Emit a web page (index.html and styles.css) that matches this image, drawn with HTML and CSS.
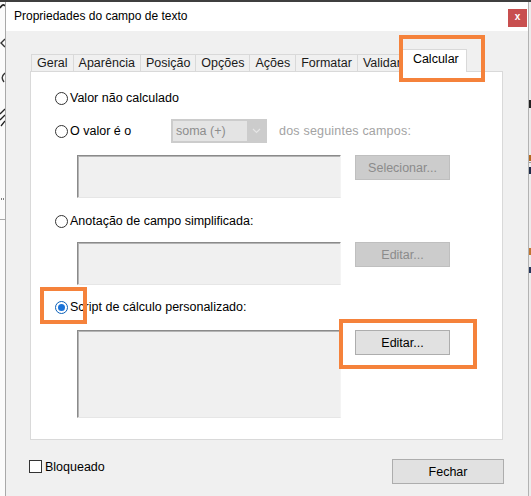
FILE: index.html
```html
<!DOCTYPE html>
<html lang="pt">
<head>
<meta charset="utf-8">
<title>Propriedades do campo de texto</title>
<link rel="stylesheet" href="styles.css">
</head>
<body>
<div class="screen">
  <div class="topband"></div>
  <div class="row">
    <div class="bg-left">
      <svg width="5" height="494" viewBox="0 0 5 494">
        <path d="M0 6 Q3 1 5 4" fill="none" stroke="#222" stroke-width="1.5"/>
        <path d="M5 37 L1 41 L5 45" fill="none" stroke="#333" stroke-width="1.4"/>
        <path d="M5 71 Q0 75 4 80" fill="none" stroke="#333" stroke-width="1.4"/>
        <path d="M0 112 L5 107 M0 118 L5 113 M1 124 L5 119" fill="none" stroke="#222" stroke-width="1.3"/>
        <path d="M1 197 h1 M3 197 h1" stroke="#555" stroke-width="1.5"/>
        <path d="M0 217.5 H5" stroke="#a8a8a8" stroke-width="1"/>
      </svg>
    </div>
    <div class="window">
      <div class="titlebar">
        <span class="title">Propriedades do campo de texto</span>
        <span class="close">x</span>
      </div>
      <div class="dlg-body">
        <div class="tabs">
          <div class="tab">Geral</div>
          <div class="tab">Aparência</div>
          <div class="tab">Posição</div>
          <div class="tab">Opções</div>
          <div class="tab">Ações</div>
          <div class="tab">Formatar</div>
          <div class="tab">Validar</div>
          <div class="tab active">Calcular</div>
        </div>
        <div class="panel">
          <div class="opt">
            <span class="radio"></span><span class="lbl">Valor não calculado</span>
          </div>
          <div class="opt opt-value">
            <div class="opt-label"><span class="radio"></span><span class="lbl">O valor é o</span></div>
            <div class="select">
              <span class="select-text">soma (+)</span>
              <span class="select-arrow">
                <svg width="9" height="6" viewBox="0 0 9 6"><path d="M1 1 L4.5 4.5 L8 1" fill="none" stroke="#e6e6e6" stroke-width="1.2"/></svg>
              </span>
            </div>
            <span class="muted">dos seguintes campos:</span>
          </div>
          <div class="group g1">
            <div class="field"></div>
            <button class="btn disabled">Selecionar...</button>
          </div>
          <div class="opt o3">
            <span class="radio"></span><span class="lbl">Anotação de campo simplificada:</span>
          </div>
          <div class="group g2">
            <div class="field"></div>
            <button class="btn disabled">Editar...</button>
          </div>
          <div class="opt o4">
            <span class="radio checked"></span><span class="lbl">Script de cálculo personalizado:</span>
          </div>
          <div class="group g3">
            <div class="field tall"></div>
            <button class="btn">Editar...</button>
          </div>
        </div>
        <div class="footer">
          <div class="check"><span class="box"></span><span class="lbl">Bloqueado</span></div>
          <button class="btn btn-close">Fechar</button>
        </div>
      </div>
    </div>
    <div class="bg-right">
      <svg width="2" height="494" viewBox="0 0 2 494">
        <rect x="0" y="98" width="2" height="8" fill="#222"/>
        <rect x="0" y="153" width="2" height="6" fill="#b4691f"/>
        <rect x="0" y="160" width="2" height="1" fill="#9a9a9a"/>
        <rect x="0" y="165" width="2" height="7" fill="#1d2b48"/>
        <rect x="0" y="246" width="2" height="7" fill="#c07530"/>
        <rect x="0" y="265" width="2" height="6" fill="#24355a"/>
      </svg>
    </div>
  </div>
  <div class="mark mark-tab"></div>
  <div class="mark mark-radio"></div>
  <div class="mark mark-edit"></div>
</div>
</body>
</html>
```

FILE: styles.css
```css
* { box-sizing: border-box; }
html, body { margin: 0; padding: 0; }
body {
  width: 531px;
  height: 496px;
  overflow: hidden;
  font-family: "Liberation Sans", Arial, sans-serif;
  font-size: 12.5px;
  color: #000;
  background: #fafafa;
}
.screen {
  position: relative;
  width: 531px;
  height: 496px;
  display: flex;
  flex-direction: column;
}
.topband { height: 2px; background: #3f3f3f; flex: 0 0 2px; }
.row { display: flex; flex: 1 1 auto; }
.bg-left { width: 5px; flex: 0 0 5px; background: #fbfbfb; }
.bg-left svg, .bg-right svg { display: block; }
.bg-right { width: 2px; flex: 0 0 2px; background: #ececec; }
.window {
  width: 524px;
  flex: 0 0 524px;
  border-left: 1px solid #a9a9a9;
  border-right: 1px solid #b2b2b2;
  background: #f0f0f0;
  display: flex;
  flex-direction: column;
}
.titlebar {
  height: 29px;
  background: #fff;
  display: flex;
  align-items: flex-start;
  justify-content: space-between;
  padding-left: 8px;
}
.title {
  font-size: 12px;
  line-height: 14px;
  margin-top: 7px;
}
.close {
  width: 19px;
  height: 18px;
  margin-top: 7px;
  margin-right: 1px;
  background: #c84f4f;
  color: #fff;
  font-weight: bold;
  font-size: 10px;
  line-height: 16px;
  text-align: center;
}
.dlg-body { padding-top: 18px; }
.tabs {
  display: flex;
  align-items: flex-end;
  margin-left: 25px;
  position: relative;
  z-index: 1;
}
.tab {
  height: 17px;
  line-height: 16px;
  padding: 0 5px;
  border: 1px solid #d9d9d9;
  border-bottom: none;
  background: #f0f0f0;
  white-space: nowrap;
  color: #1a1a1a;
}
.tab + .tab { margin-left: -1px; }
.tab.active {
  height: 23px;
  margin-left: -6px;
  margin-bottom: -1px;
  padding: 1px 7px 0 11px;
  background: #fff;
  position: relative;
  color: #000;
}
.panel {
  margin: 0 25px 0 24px;
  border: 1px solid #d9d9d9;
  background: #fff;
  padding: 16px 0 21px 24px;
}
.opt {
  display: flex;
  align-items: center;
  height: 20px;
  white-space: nowrap;
}
.radio {
  width: 13px;
  height: 13px;
  border: 1px solid #333;
  border-radius: 50%;
  background: #fff;
  flex: 0 0 13px;
  margin-right: 2px;
  position: relative;
}
.radio.checked { border-color: #0a5fb8; }
.radio.checked::after {
  content: "";
  position: absolute;
  left: 2px;
  top: 2px;
  width: 7px;
  height: 7px;
  border-radius: 50%;
  background: #1a73d9;
}
.opt-value { height: 24px; margin-top: 11px; }
.opt-label { display: flex; align-items: center; width: 116px; flex: 0 0 116px; }
.select {
  width: 96px;
  height: 24px;
  background: #cccccc;
  display: flex;
  padding: 2px;
  margin-right: 12px;
}
.select-text {
  width: 74px;
  background: #e4e4e4;
  color: #8d8d8d;
  line-height: 20px;
  padding-left: 3px;
}
.select-arrow {
  flex: 1 1 auto;
  display: flex;
  align-items: center;
  justify-content: center;
}
.select-arrow svg { display: block; }
.muted { color: #a3a3a3; letter-spacing: 0.2px; }
.group {
  display: flex;
  align-items: flex-start;
  gap: 14px;
  margin-left: 22px;
}
.g1 { margin-top: 12px; }
.o3 { margin-top: 13px; }
.g2 { margin-top: 11px; }
.o4 { margin-top: 12px; }
.g3 { margin-top: 13px; }
.field {
  width: 264px;
  height: 43px;
  background: #f0f0f0;
  border-top: 1px solid #8a8a8a;
  border-left: 1px solid #8a8a8a;
  border-right: 1px solid #f4f4f4;
  border-bottom: 1px solid #e6e6e6;
  box-shadow: inset 1px 1px 0 #b4b4b4;
}
.field.tall { height: 88px; }
.btn {
  width: 95px;
  height: 25px;
  padding: 0;
  font-family: "Liberation Sans", Arial, sans-serif;
  font-size: 12.5px;
  color: #000;
  background: #e1e1e1;
  border: 1px solid #adadad;
  text-align: center;
}
.btn.disabled {
  background: #cccccc;
  border-color: #bfbfbf;
  color: #8b8b8b;
}
.footer {
  display: flex;
  justify-content: space-between;
  align-items: flex-start;
  margin-top: 19px;
  padding: 0 24px 0 23px;
}
.check {
  display: flex;
  align-items: center;
  margin-top: 1px;
  height: 13px;
}
.box {
  width: 13px;
  height: 13px;
  border: 1px solid #333;
  background: #fff;
  margin-right: 3px;
}
.btn-close { width: 112px; height: 25px; }
.mark {
  position: absolute;
  border: 4px solid #f5823b;
  z-index: 5;
}
.mark-tab { left: 399px; top: 35px; width: 86px; height: 47px; }
.mark-radio { left: 40px; top: 287px; width: 47px; height: 37px; }
.mark-edit { left: 339px; top: 319px; width: 138px; height: 50px; }
```
